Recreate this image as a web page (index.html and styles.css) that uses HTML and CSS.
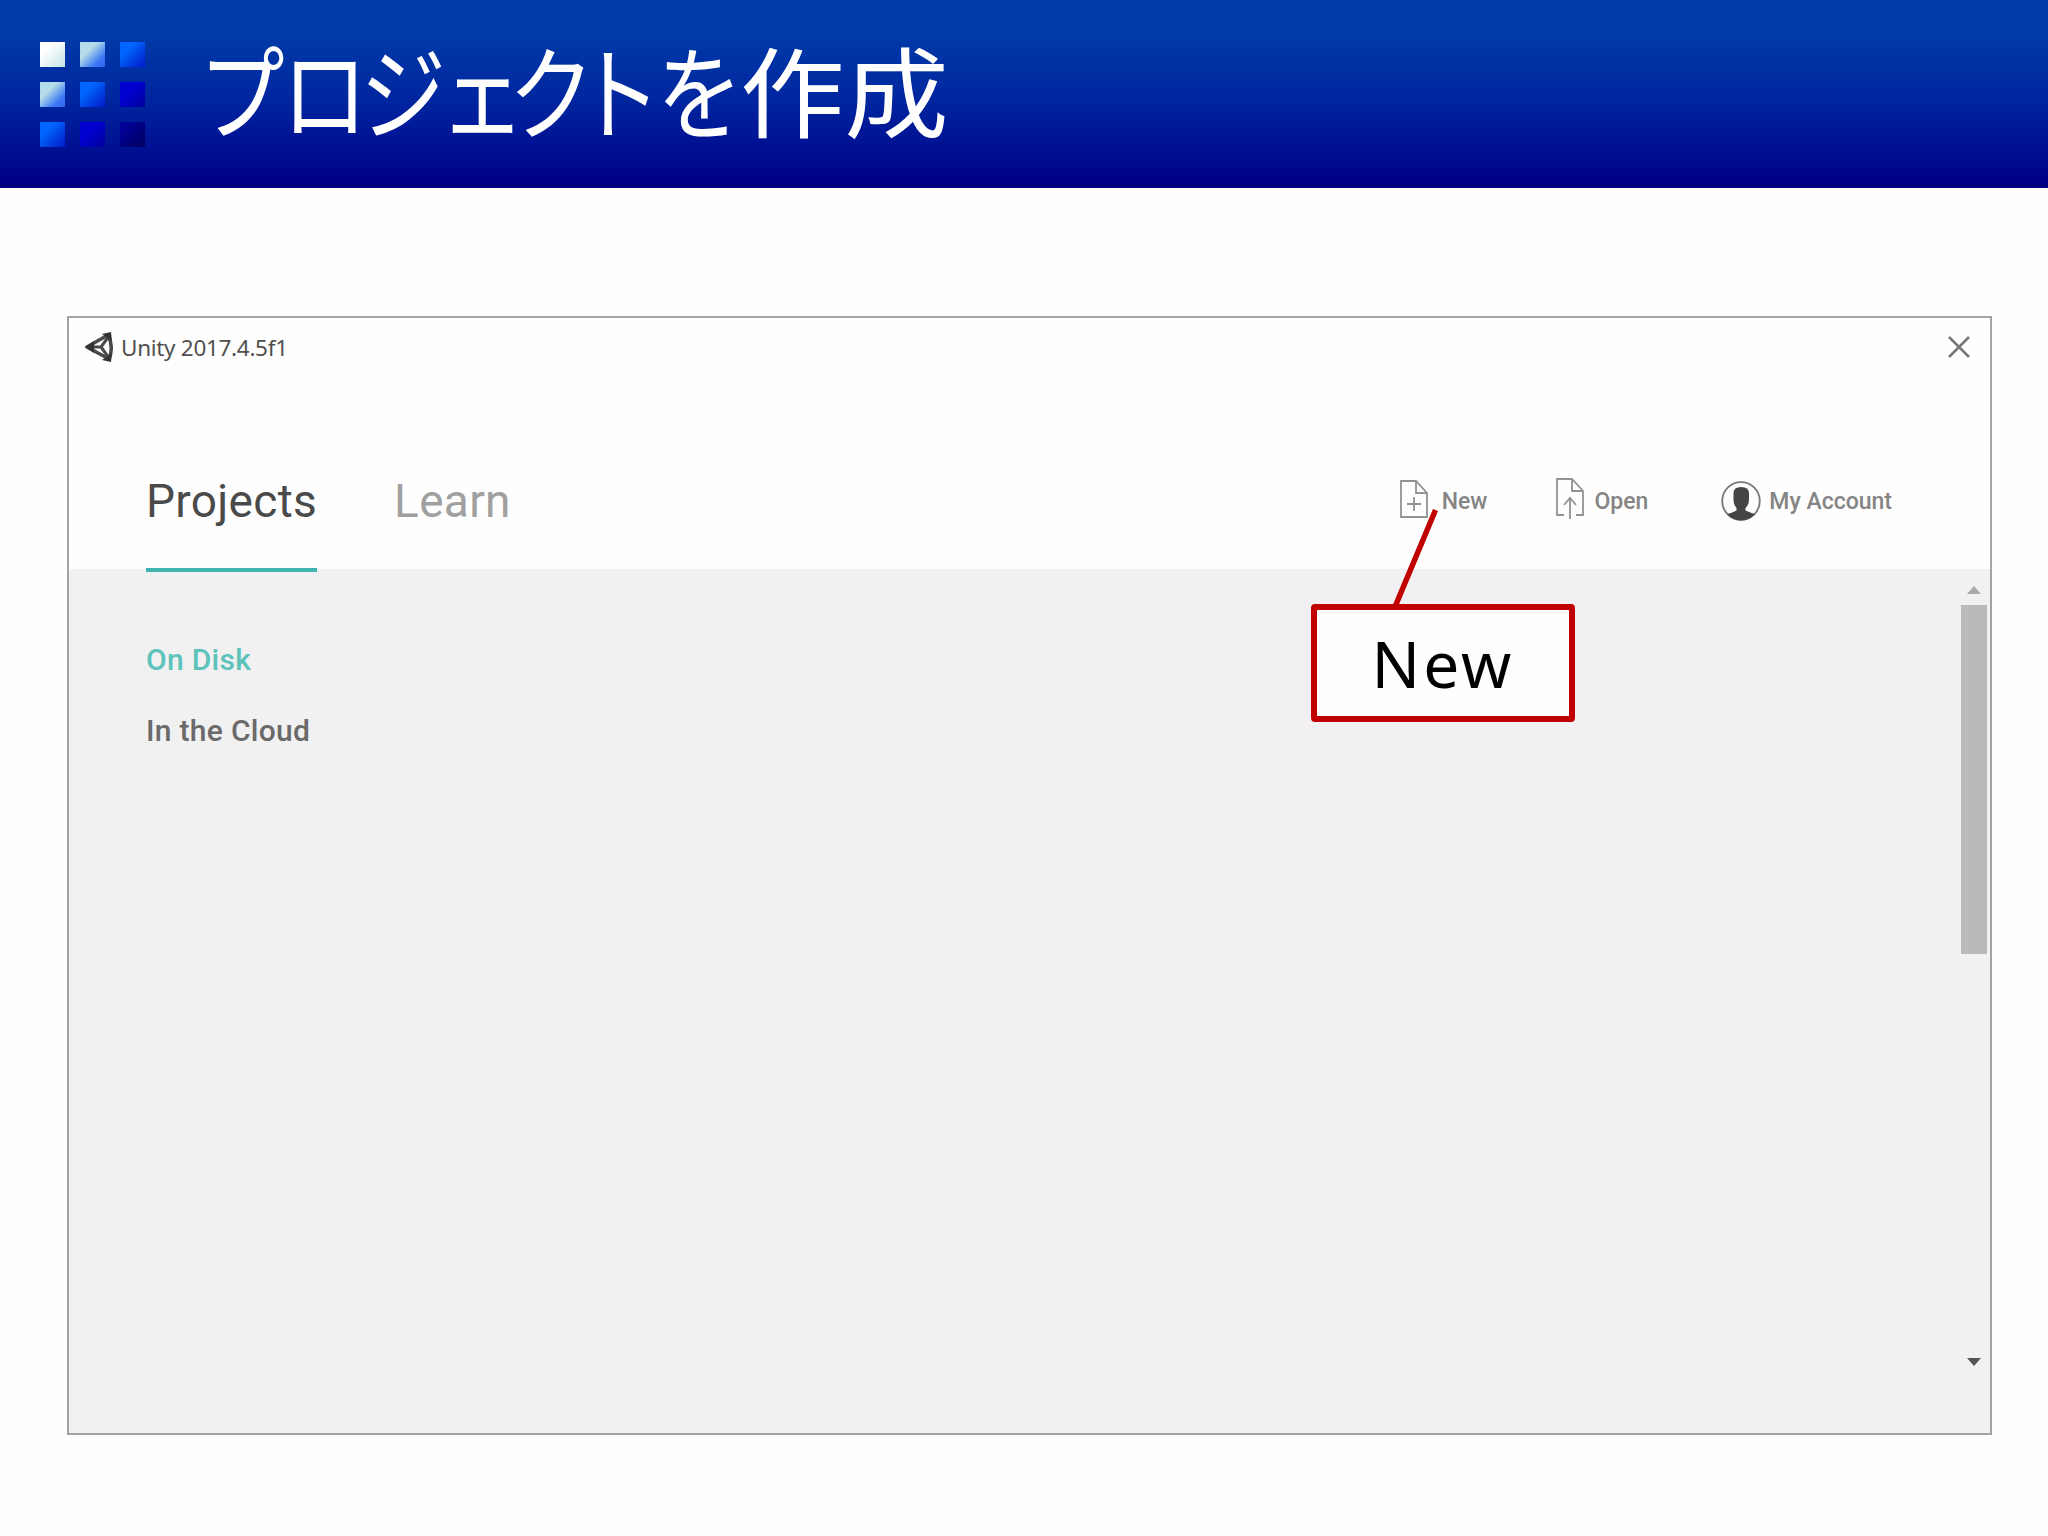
FILE: index.html
```html
<!DOCTYPE html>
<html lang="ja">
<head>
    <meta charset="UTF-8">
    <meta name="viewport" content="width=device-width, initial-scale=1.0">
    <title>プロジェクトを作成</title>
    <link rel="stylesheet" href="styles.css">
</head>
<body>
    <header class="slide-header">
        <div class="squares">
            <span class="sq white"></span>
            <span class="sq light"></span>
            <span class="sq blue"></span>
            <span class="sq light"></span>
            <span class="sq blue"></span>
            <span class="sq deep"></span>
            <span class="sq blue"></span>
            <span class="sq deep"></span>
            <span class="sq navy"></span>
        </div>
        <h1><span class="kana">プ<span class="tight">ロ</span><span class="loose">ジ</span><span class="tight">ェ</span>ク<span class="loose">ト</span>を</span><span class="kanji">作成</span></h1>
    </header>

    <main class="window">
        <div class="title-bar">
            <svg class="unity-logo" width="28" height="30" viewBox="0 0 28 30">
                <path d="M2 15 L23 3 Q29 15 24 27 Z" fill="none" stroke="#4a4a4a" stroke-width="3.5" stroke-linejoin="round"/>
                <path d="M3 15 H16 L24 4 M16 15 L24 26" fill="none" stroke="#4a4a4a" stroke-width="3"/>
                <path d="M0 15 L9 9 V21 Z M17 2 L26 0 L27 9 Z M17 28 L26 30 L27 21 Z" fill="#333"/>
            </svg>
            <span class="app-name">Unity 2017.4.5f1</span>
            <svg class="close" width="22" height="22" viewBox="0 0 22 22">
                <path d="M1 1 L21 21 M21 1 L1 21" stroke="#777" stroke-width="2.5"/>
            </svg>
        </div>

        <div class="toolbar">
            <nav class="tabs">
                <span class="tab active">Projects</span>
                <span class="tab">Learn</span>
            </nav>
            <div class="actions">
                <div class="action new">
                    <svg width="28" height="38" viewBox="0 0 28 38">
                        <path d="M1 1 H16 L27 13 V37 H1 Z M16 1 V13 H27 M7 24 H21 M14 17 V31" fill="none" stroke="#909391" stroke-width="1.8"/>
                    </svg>
                    <span>New</span>
                </div>
                <div class="action open">
                    <svg width="28" height="42" viewBox="0 0 28 42">
                        <path d="M8 37 H1 V1 H16 L27 13 V37 H20 M16 1 V13 H27 M14 41 V21 M8 27 L14 20 L20 27" fill="none" stroke="#909391" stroke-width="1.8"/>
                    </svg>
                    <span>Open</span>
                </div>
                <div class="action account">
                    <svg width="40" height="40" viewBox="0 0 40 40">
                        <circle cx="20" cy="20" r="18.8" fill="#fdfdfd" stroke="#777" stroke-width="1.8"/>
                        <path d="M12.5 12 Q12.5 6 20 6 Q28 6 28 12 V18 Q28 24 24.5 27 V29.5 Q30 32 34 33 Q28 39.5 20 39.5 Q12 39.5 6 33 Q11 32 15.5 29.5 V27 Q12.5 24 12.5 18 Z" fill="#444645"/>
                    </svg>
                    <span>My Account</span>
                </div>
            </div>
        </div>

        <div class="content">
            <ul class="side-menu">
                <li class="selected">On Disk</li>
                <li>In the Cloud</li>
            </ul>
            <div class="scrollbar">
                <span class="arrow-up"></span>
                <span class="thumb"></span>
                <span class="arrow-down"></span>
            </div>
        </div>
    </main>

    <!-- Callout pointing at the New button -->
    <svg class="pointer" width="60" height="110" viewBox="0 0 60 110">
        <path d="M49.5 4 L8.5 102" stroke="#c00000" stroke-width="5.5"/>
    </svg>
    <div class="callout">New</div>
</body>
</html>
```
FILE: styles.css
```css
* {
    box-sizing: border-box;
}

body {
    margin: 0;
    width: 2048px;
    height: 1536px;
    background: #fdfefd;
    font-family: Roboto, sans-serif;
    overflow: hidden;
}

/* Slide header */
.slide-header {
    display: flex;
    height: 188px;
    padding-left: 40px;
    background: linear-gradient(#003ba9 0%, #003aa8 18%, #0028a0 50%, #000b90 85%, #000085 96%, #000080 100%);
}

.squares {
    display: grid;
    grid-template-columns: repeat(3, 25px);
    grid-auto-rows: 25px;
    gap: 15px;
    padding-top: 42px;
}

.sq.white { background: linear-gradient(135deg, #fff 30%, #c3e3e3); }
.sq.light { background: linear-gradient(135deg, #b3dce8 35%, #3c78f5 75%, #2c66f0); }
.sq.blue { background: linear-gradient(135deg, #0066ff 30%, #0018c8); }
.sq.deep { background: linear-gradient(135deg, #0000cf 40%, #000098); }
.sq.navy { background: linear-gradient(135deg, #000096 20%, #00005e); }

h1 {
    display: flex;
    margin: 0 0 0 59px;
    font-family: "Noto Sans CJK JP", sans-serif;
    font-size: 102px;
    font-weight: 400;
    line-height: 175px;
    font-feature-settings: "palt";
    color: #fff;
    white-space: nowrap;
}

/* Condensed kana next to wide kanji */
.kana {
    width: 536px;
    transform: scaleX(0.842);
    transform-origin: left;
}

.kana .tight {
    letter-spacing: -8px;
}

.kana .loose {
    letter-spacing: 4px;
}

.kanji {
    font-size: 98px;
    transform: scaleX(1.065);
    transform-origin: left;
}

/* Launcher window */
.window {
    width: 1925px;
    height: 1119px;
    margin: 128px 0 0 67px;
    border: 2px solid #a3a3a3;
    background: #fefefe;
    display: flex;
    flex-direction: column;
}

.title-bar {
    display: flex;
    align-items: center;
    height: 57px;
    padding: 0 20px 0 16px;
}

.app-name {
    margin-left: 8px;
    padding-top: 2px;
    font-family: "Noto Sans", sans-serif;
    font-size: 22.5px;
    letter-spacing: -0.3px;
    color: #505050;
}

.close {
    margin-left: auto;
}

.toolbar {
    display: flex;
    justify-content: space-between;
    height: 194px;
    padding: 0 98px 0 77px;
}

/* Keeps the active underline above the content background */
.tabs {
    display: flex;
    gap: 77px;
    position: relative;
    z-index: 1;
}

.tab {
    height: 197px;
    padding-top: 97px;
    font-size: 46px;
    line-height: 58px;
    letter-spacing: 0.3px;
    color: #a0a0a0;
}

.tab.active {
    color: #4a4a4a;
    border-bottom: 4px solid #3eb5b0;
}

.actions {
    display: flex;
    align-items: center;
    height: 50px;
    margin-top: 101px;
    font-size: 23px;
    font-weight: 500;
    color: #858585;
}

.action {
    display: flex;
    align-items: center;
    gap: 14px;
}

.action.new svg {
    margin-top: -4px;
}

.open {
    margin-left: 69px;
    gap: 10px;
}

.open svg {
    margin-top: -4px;
}

.account {
    margin-left: 73px;
    gap: 8px;
}

.content {
    display: flex;
    justify-content: space-between;
    flex: 1;
    background: linear-gradient(90deg, #f0f1f1, #f2f0f3 25%);
}

.side-menu {
    margin: 0;
    padding: 71px 0 0 77px;
    list-style: none;
    font-size: 30px;
    font-weight: 500;
    line-height: 40px;
    letter-spacing: 0.3px;
    color: #6a6a6a;
}

.side-menu li {
    margin-bottom: 31px;
}

.side-menu .selected {
    color: #5cc2ba;
}

.scrollbar {
    display: flex;
    flex-direction: column;
    align-items: center;
    width: 26px;
    margin-right: 3px;
    padding-top: 17px;
}

.arrow-up {
    border: 7px solid transparent;
    border-top: none;
    border-bottom: 8px solid #aaa;
}

.thumb {
    width: 26px;
    height: 349px;
    margin-top: 11px;
    background: #bab9bb;
}

.arrow-down {
    margin-top: 404px;
    border: 7px solid transparent;
    border-bottom: none;
    border-top: 8px solid #555;
}

/* Callout */
.pointer {
    position: absolute;
    left: 1386px;
    top: 506px;
}

.callout {
    position: absolute;
    left: 1311px;
    top: 604px;
    width: 264px;
    height: 118px;
    border: 6px solid #c00000;
    border-radius: 4px;
    background: #fdfefd;
    font-family: "Noto Sans", sans-serif;
    font-size: 64px;
    line-height: 108px;
    letter-spacing: 3px;
    text-align: center;
    color: #000;
}
```
